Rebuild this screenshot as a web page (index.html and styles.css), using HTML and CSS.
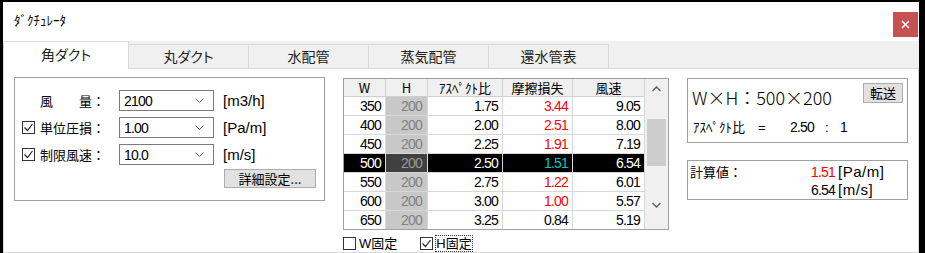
FILE: index.html
```html
<!DOCTYPE html>
<html lang="ja">
<head>
    <meta charset="UTF-8">
    <meta name="viewport" content="width=device-width, initial-scale=1.0">
    <title>ﾀﾞｸﾁｭﾚｰﾀ</title>
    <link rel="stylesheet" href="styles.css">
</head>
<body>
    <div class="window">
        <!-- タイトルバー -->
        <div class="titlebar">
            <span class="title">ﾀﾞｸﾁｭﾚｰﾀ</span>
            <button class="close">
                <svg width="9" height="9" viewBox="0 0 9 9"><path d="M1 1L8 8M8 1L1 8" stroke="#fff" stroke-width="1.6"/></svg>
            </button>
        </div>

        <!-- タブ -->
        <div class="tabs">
            <div class="tab active">角ダクト</div>
            <div class="tab">丸ダクト</div>
            <div class="tab">水配管</div>
            <div class="tab">蒸気配管</div>
            <div class="tab">還水管表</div>
            <div class="tab-fill"></div>
        </div>

        <div class="page">
            <!-- 入力条件 -->
            <div class="group inputs">
                <div class="row">
                    <span class="chk-space"></span>
                    <span class="lbl">風　　量：</span>
                    <div class="combo"><span class="num">2100</span><svg class="chev" width="9" height="5" viewBox="0 0 9 5"><path d="M0.5 0.5L4.5 4.5L8.5 0.5" fill="none" stroke="#606060"/></svg></div>
                    <span class="unit">[m3/h]</span>
                </div>
                <div class="row">
                    <span class="chk on"><svg width="11" height="11" viewBox="0 0 11 11"><path d="M1.5 5.5L4.5 8.5L9.5 2" fill="none" stroke="#222" stroke-width="1.2"/></svg></span>
                    <span class="lbl">単位圧損：</span>
                    <div class="combo"><span class="num">1.00</span><svg class="chev" width="9" height="5" viewBox="0 0 9 5"><path d="M0.5 0.5L4.5 4.5L8.5 0.5" fill="none" stroke="#606060"/></svg></div>
                    <span class="unit">[Pa/m]</span>
                </div>
                <div class="row">
                    <span class="chk on"><svg width="11" height="11" viewBox="0 0 11 11"><path d="M1.5 5.5L4.5 8.5L9.5 2" fill="none" stroke="#222" stroke-width="1.2"/></svg></span>
                    <span class="lbl">制限風速：</span>
                    <div class="combo"><span class="num">10.0</span><svg class="chev" width="9" height="5" viewBox="0 0 9 5"><path d="M0.5 0.5L4.5 4.5L8.5 0.5" fill="none" stroke="#606060"/></svg></div>
                    <span class="unit">[m/s]</span>
                </div>
                <button class="btn detail">詳細設定...</button>
            </div>

            <!-- サイズ一覧 -->
            <div class="list-col">
                <div class="list">
                    <table class="grid">
                        <thead>
                            <tr><th class="c-w">W</th><th class="c-h">H</th><th class="c-a">ｱｽﾍﾟｸﾄ比</th><th class="c-f">摩擦損失</th><th class="c-v">風速</th></tr>
                        </thead>
                        <tbody>
                            <tr><td>350</td><td class="hcol">200</td><td>1.75</td><td class="red">3.44</td><td>9.05</td></tr>
                            <tr><td>400</td><td class="hcol">200</td><td>2.00</td><td class="red">2.51</td><td>8.00</td></tr>
                            <tr><td>450</td><td class="hcol">200</td><td>2.25</td><td class="red">1.91</td><td>7.19</td></tr>
                            <tr class="sel"><td>500</td><td class="hcol">200</td><td>2.50</td><td class="cyan">1.51</td><td>6.54</td></tr>
                            <tr><td>550</td><td class="hcol">200</td><td>2.75</td><td class="red">1.22</td><td>6.01</td></tr>
                            <tr><td>600</td><td class="hcol">200</td><td>3.00</td><td class="red">1.00</td><td>5.57</td></tr>
                            <tr><td>650</td><td class="hcol">200</td><td>3.25</td><td>0.84</td><td>5.19</td></tr>
                        </tbody>
                    </table>
                    <div class="scrollbar">
                        <svg class="arrow" width="9" height="6" viewBox="0 0 9 6"><path d="M0.5 5L4.5 1L8.5 5" fill="none" stroke="#606060" stroke-width="1.5"/></svg>
                        <div class="thumb"></div>
                        <svg class="arrow down" width="9" height="6" viewBox="0 0 9 6"><path d="M0.5 1L4.5 5L8.5 1" fill="none" stroke="#606060" stroke-width="1.5"/></svg>
                    </div>
                </div>
                <div class="fix-row">
                    <span class="chk"></span><span class="fix-lbl">W固定</span>
                    <span class="chk on"><svg width="11" height="11" viewBox="0 0 11 11"><path d="M1.5 5.5L4.5 8.5L9.5 2" fill="none" stroke="#222" stroke-width="1.2"/></svg></span><span class="fix-lbl focus">H固定</span>
                </div>
            </div>

            <!-- 結果 -->
            <div class="result-col">
                <div class="box size-box">
                    <div class="size-line">
                        <span class="size">W×H：500×200</span>
                        <button class="btn send">転送</button>
                    </div>
                    <div class="aspect">
                        <span class="a-lbl">ｱｽﾍﾟｸﾄ比</span><span class="a-eq">=</span><span class="a-val num">2.50</span><span class="a-sep">:</span><span class="num">1</span>
                    </div>
                </div>
                <div class="box calc-box">
                    <div class="calc-line">
                        <span class="calc-lbl">計算値：</span><span class="calc-num num red">1.51</span><span class="unit-r">[Pa/m]</span>
                    </div>
                    <div class="calc-line">
                        <span class="calc-lbl"></span><span class="calc-num num">6.54</span><span class="unit-r">[m/s]</span>
                    </div>
                </div>
            </div>
        </div>
    </div>
</body>
</html>
```

FILE: styles.css
```css
/* Styles généraux */
body {
    margin: 0;
    height: 253px;
    overflow: hidden;
    background-color: #000;
    font-family: "Liberation Sans", "Noto Sans CJK JP", sans-serif;
    color: #000;
}

.window {
    margin: 2px 0 0 3px;
    width: 916px;
    height: 251px;
    background-color: #f0f0f0;
}

/* Chiffres étroits */
.num {
    font-family: "Liberation Sans", sans-serif;
    font-size: 14px;
    letter-spacing: -0.8px;
}

/* Barre de titre */
.titlebar {
    height: 39px;
    background-color: #fff;
    display: flex;
    justify-content: space-between;
}

.title {
    font-size: 13px;
    line-height: 16px;
    padding: 11px 0 0 11px;
}

.close {
    width: 25px;
    height: 25px;
    margin: 10px 1px 0 0;
    padding: 0;
    border: none;
    background-color: #c75050;
    display: flex;
    align-items: center;
    justify-content: center;
}

/* Onglets */
.tabs {
    display: flex;
    height: 28px;
}

.tab {
    width: 119px;
    height: 23px;
    margin-top: 3px;
    border: 1px solid #d9d9d9;
    border-left: none;
    background-color: #f0f0f0;
    font-family: "Noto Sans CJK JP", sans-serif;
    font-feature-settings: "palt";
    font-size: 14px;
    line-height: 23px;
    text-align: center;
    color: #222;
}

.tab.active {
    width: 124px;
    height: 27px;
    margin-top: 0;
    border-left: 1px solid #d9d9d9;
    border-bottom: none;
    background-color: #fff;
    line-height: 24px;
}

.tab-fill {
    flex: 1;
    border-bottom: 1px solid #d9d9d9;
}

/* Page */
.page {
    height: 175px;
    background-color: #fff;
    border: 1px solid #d9d9d9;
    border-top: none;
    padding: 8px 0 0 10px;
    display: flex;
    align-items: flex-start;
}

.group,
.box {
    border: 1px solid #a0a0a0;
    background-color: #fff;
}

/* Conditions */
.inputs {
    width: 309px;
    height: 113px;
    padding-top: 9px;
}

.row {
    height: 27px;
    display: flex;
    align-items: center;
    font-size: 13px;
}

.chk-space {
    width: 13px;
    margin-left: 7px;
}

.row .chk {
    margin-left: 7px;
}

.chk {
    width: 11px;
    height: 11px;
    border: 1px solid #333;
    background-color: #fff;
    display: inline-flex;
}

.lbl {
    width: 65px;
    margin-left: 5px;
    font-family: "Noto Sans CJK JP", sans-serif;
    font-size: 13px;
    line-height: 16px;
    white-space: nowrap;
}

.combo {
    width: 89px;
    height: 19px;
    margin-left: 14px;
    padding-left: 4px;
    border: 1px solid #7a7a7a;
    display: flex;
    align-items: center;
    justify-content: space-between;
}

.chev {
    margin-right: 9px;
}

.unit {
    margin-left: 9px;
    font-size: 15px;
}

.btn {
    border: 1px solid #adadad;
    background-color: #e1e1e1;
    font-family: "Noto Sans CJK JP", sans-serif;
    font-size: 13px;
    color: #000;
    padding: 0;
}

.detail {
    width: 92px;
    height: 19px;
    margin: 1px 0 0 209px;
    line-height: 16px;
}

/* Liste */
.list-col {
    margin: 1px 0 0 18px;
}

.list {
    display: flex;
    border: 1px solid #a0a0a0;
}

.grid {
    border-collapse: collapse;
    font-family: "Liberation Sans", sans-serif;
    font-size: 14px;
    letter-spacing: -0.8px;
}

.grid th {
    height: 17px;
    padding: 0;
    background-color: #f0f0f0;
    border-right: 1px solid #d0d0d0;
    border-bottom: 1px solid #d0d0d0;
    font-weight: normal;
    font-family: "Noto Sans CJK JP", sans-serif;
    font-size: 13px;
    letter-spacing: 0;
    line-height: 16px;
}

.grid td {
    height: 18px;
    padding: 0 4px 0 0;
    text-align: right;
    border-right: 1px solid #d8d8d8;
    border-bottom: 1px solid #d8d8d8;
    line-height: 18px;
}

.grid tr:last-child td {
    border-bottom: none;
}

.c-w { width: 41px; }
.c-h { width: 41px; }
.c-a { width: 74px; }
.c-f { width: 69px; }
.c-v { width: 71px; }

.grid td.hcol {
    background-color: #c8c8c8;
    color: #808080;
    padding-right: 5px;
}

.red { color: #f00; }

.grid .sel td {
    background-color: #000;
    color: #fff;
}

.grid .sel td.hcol {
    background-color: #404040;
    color: #999;
}

.grid .sel td.cyan { color: #00c8c8; }

.scrollbar {
    width: 23px;
    background-color: #f0f0f0;
    display: flex;
    flex-direction: column;
    align-items: center;
}

.arrow {
    margin-top: 7px;
}

.thumb {
    width: 19px;
    height: 47px;
    margin-top: 27px;
    background-color: #cdcdcd;
}

.arrow.down {
    margin-top: 36px;
}

.fix-row {
    display: flex;
    align-items: center;
    margin-top: 5px;
    font-size: 13px;
}

.fix-lbl {
    margin-left: 2px;
    margin-right: 22px;
    line-height: 15px;
    border: 1px dotted transparent;
}

.fix-lbl.focus {
    border-color: #333;
}

/* Résultats */
.result-col {
    margin: 1px 0 0 18px;
    width: 221px;
}

.size-box {
    height: 63px;
}

.size-line {
    display: flex;
    align-items: flex-start;
}

.size {
    font-family: "Noto Sans CJK JP", sans-serif;
    font-weight: 300;
    font-size: 18px;
    line-height: 24px;
    margin: 6px 0 0 4px;
}

.send {
    width: 40px;
    height: 20px;
    margin: 4px 4px 0 auto;
    line-height: 16px;
}

.aspect {
    display: flex;
    align-items: baseline;
    font-size: 13px;
    margin: 10px 0 0 5px;
    line-height: 16px;
}

.a-lbl { width: 65px; flex: none; }
.a-eq { width: 32px; flex: none; }
.a-val { width: 35px; flex: none; }
.a-sep { width: 15px; flex: none; }

.calc-box {
    height: 40px;
    margin-top: 17px;
    padding-top: 2px;
    box-sizing: border-box;
}

.calc-line {
    display: flex;
    align-items: baseline;
    height: 18px;
    line-height: 18px;
}

.calc-lbl {
    flex: none;
    width: 121px;
    padding-left: 2px;
    font-family: "Noto Sans CJK JP", sans-serif;
    font-size: 13px;
}

.calc-num { flex: none; }

.unit-r {
    flex: none;
    margin-left: 3px;
    font-size: 15px;
    letter-spacing: 0.5px;
}
```
